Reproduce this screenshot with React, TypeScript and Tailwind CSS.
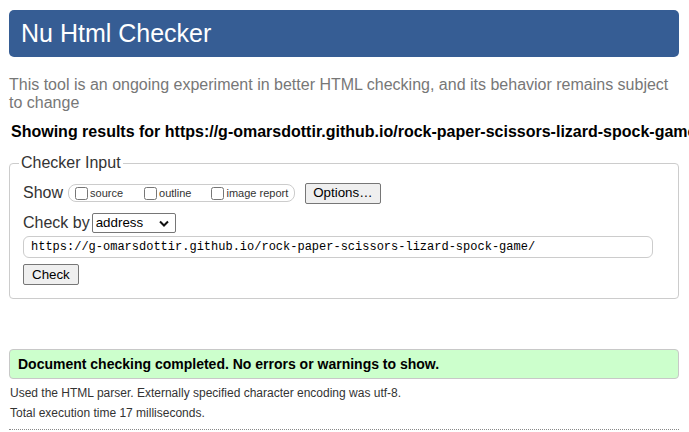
export default function App() {
  const url = 'https://g-omarsdottir.github.io/rock-paper-scissors-lizard-spock-game/';
  return (
    <div className="h-[432px] w-[689px] overflow-hidden bg-white pl-[9px] pr-[10px] pt-[10px] font-['Liberation_Sans',Arial,sans-serif] text-[#222]">
      {/* Header */}
      <div className="flex h-[47px] items-center rounded-[5px] bg-[#365d94] pl-[12px]">
        <h1 className="text-[25px] leading-none text-white">Nu Html Checker</h1>
      </div>

      <p className="mt-[19px] text-[16px] leading-[18px] text-[#777]">
        This tool is an ongoing experiment in better HTML checking, and its behavior remains subject to change
      </p>

      <p className="mt-[11px] whitespace-nowrap pl-[2px] text-[16px] font-bold leading-[18px] text-black">
        Showing results for {url}
      </p>

      {/* Checker input */}
      <fieldset className="mt-[13px] h-[145px] rounded-[4px] border border-[#ccc] px-[13px] pt-[2px]">
        <legend className="-ml-[4px] px-[2px] text-[16px] leading-[18px] text-[#333]">Checker Input</legend>

        <div className="mt-[7px] flex items-center">
          <span className="text-[16px] text-[#333]">Show</span>
          <div className="ml-[5px] flex h-[18px] items-center rounded-[8px] border border-[#ccc] pl-[6px] pr-[6px] text-[11px] text-[#333]">
            <label className="flex items-center">
              <input type="checkbox" className="m-0 h-[13px] w-[13px]" />
              <span className="ml-[2px]">source</span>
            </label>
            <label className="ml-[21px] flex items-center">
              <input type="checkbox" className="m-0 h-[13px] w-[13px]" />
              <span className="ml-[2px]">outline</span>
            </label>
            <label className="ml-[20px] flex items-center">
              <input type="checkbox" className="m-0 h-[13px] w-[13px]" />
              <span className="ml-[2px]">image report</span>
            </label>
          </div>
          <button className="ml-[10px] h-[21px] rounded-[2px] border border-[#767676] bg-[#efefef] px-[7px] text-[13.33px] leading-none text-black">
            Options…
          </button>
        </div>

        <div className="mt-[6px] flex items-center">
          <span className="text-[16px] text-[#333]">Check by</span>
          <div className="ml-[2px] flex h-[20px] w-[84px] items-center justify-between rounded-[2px] border border-[#767676] bg-white pl-[3px] pr-[6px] text-[13.33px] text-black">
            <span>address</span>
            <svg width="10" height="7" viewBox="0 0 10 7">
              <path d="M1 1.5 L5 5.5 L9 1.5" fill="none" stroke="#111" strokeWidth="2" />
            </svg>
          </div>
        </div>

        <div className="mt-[1px] flex h-[22px] w-[630px] items-center rounded-[6px] border border-[#ccc] pl-[7px] font-['Liberation_Mono','DejaVu_Sans_Mono',monospace] text-[12px] text-black">
          {url}
        </div>

        <button className="mt-[6px] h-[21px] rounded-[2px] border border-[#767676] bg-[#efefef] px-[8px] text-[13.33px] leading-none text-black">
          Check
        </button>
      </fieldset>

      {/* Result */}
      <div className="mt-[50px] flex h-[30px] items-center rounded-[4px] border border-[#c8c8c8] bg-[#ccffcc] pl-[8px] text-[14px] font-bold text-black">
        Document checking completed. No errors or warnings to show.
      </div>

      <p className="mt-[7px] pl-[1px] text-[12px] leading-[14px] text-[#333]">
        Used the HTML parser. Externally specified character encoding was utf-8.
      </p>
      <p className="mt-[6px] pl-[1px] text-[12px] leading-[14px] text-[#333]">Total execution time 17 milliseconds.</p>
      <div className="mt-[9px] border-t border-dotted border-[#888]" />
    </div>
  );
}
